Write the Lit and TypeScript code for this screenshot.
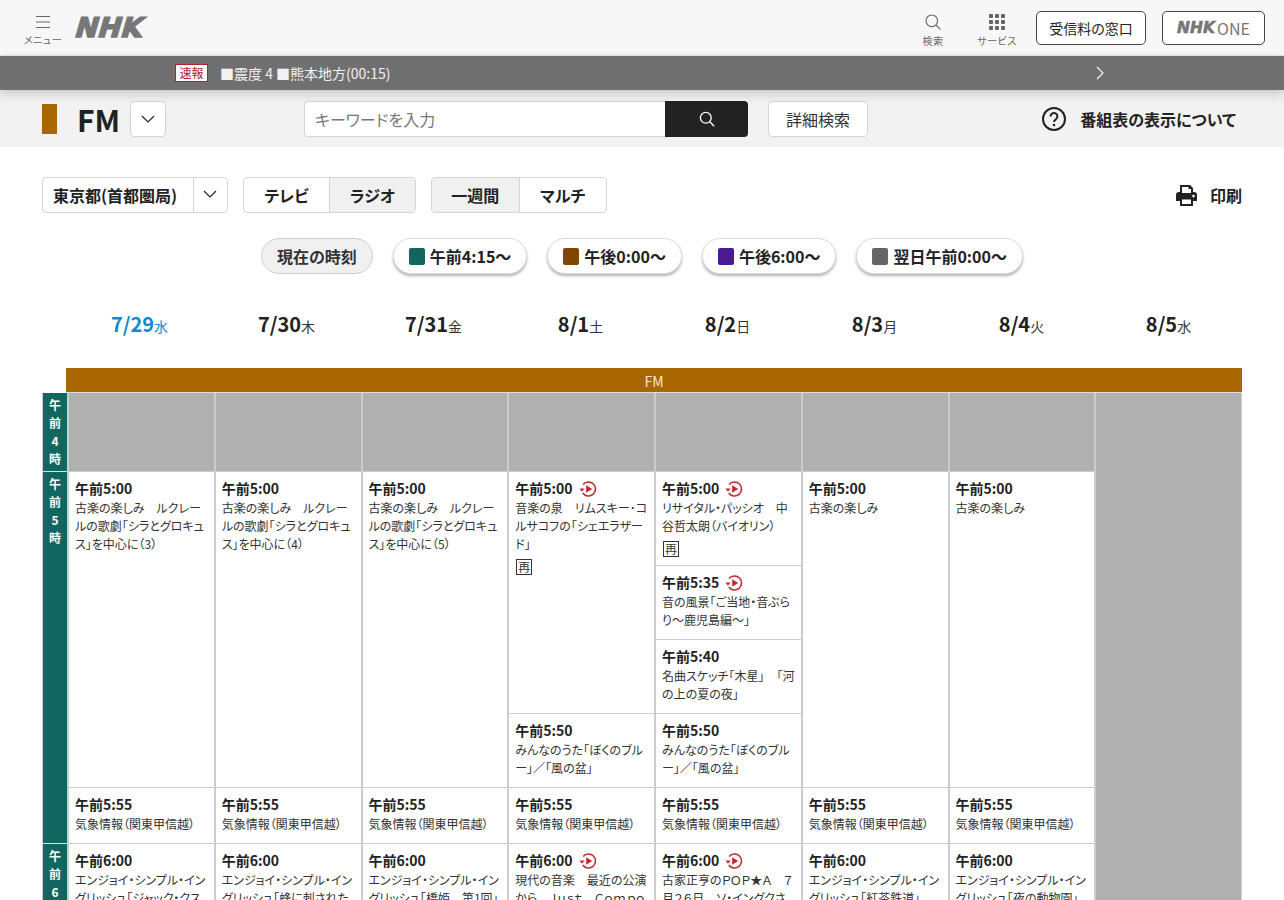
import { LitElement, html, css, svg } from 'lit';
import { customElement } from 'lit/decorators.js';

type Cell = { h: number; time?: string; text?: string; replay?: boolean; re?: boolean };

const AM4 = { h: 79 };
const WEATHER: Cell = { h: 56, time: '午前5:55', text: '気象情報（関東甲信越）' };
const ENGLISH = 'エンジョイ・シンプル・イングリッシュ';
const song: Cell = { h: 74, time: '午前5:50', text: 'みんなのうた「ぼくのブルー」／「風の盆」' };

const columns: Cell[][] = [
  [
    AM4,
    { h: 316, time: '午前5:00', text: '古楽の楽しみ　ルクレールの歌劇「シラとグロキュス」を中心に（3）' },
    WEATHER,
    { h: 300, time: '午前6:00', text: ENGLISH + '「ジャック・クスの冒険」' }
  ],
  [
    AM4,
    { h: 316, time: '午前5:00', text: '古楽の楽しみ　ルクレールの歌劇「シラとグロキュス」を中心に（4）' },
    WEATHER,
    { h: 300, time: '午前6:00', text: ENGLISH + '「蜂に刺された話」' }
  ],
  [
    AM4,
    { h: 316, time: '午前5:00', text: '古楽の楽しみ　ルクレールの歌劇「シラとグロキュス」を中心に（5）' },
    WEATHER,
    { h: 300, time: '午前6:00', text: ENGLISH + '「橋姫　第1回」' }
  ],
  [
    AM4,
    { h: 242, time: '午前5:00', replay: true, re: true, text: '音楽の泉　リムスキー･コルサコフの「シェエラザード」' },
    song,
    WEATHER,
    { h: 300, time: '午前6:00', replay: true, text: '現代の音楽　最近の公演から　Ｊｕｓｔ　Ｃｏｍｐｏｓｅｄ' }
  ],
  [
    AM4,
    { h: 94, time: '午前5:00', replay: true, re: true, text: 'リサイタル・パッシオ　中谷哲太朗（バイオリン）' },
    { h: 74, time: '午前5:35', replay: true, text: '音の風景「ご当地・音ぶらり～鹿児島編～」' },
    { h: 74, time: '午前5:40', text: '名曲スケッチ「木星」　「河の上の夏の夜」' },
    song,
    WEATHER,
    { h: 300, time: '午前6:00', replay: true, text: '古家正亨のＰＯＰ★Ａ　７月２６日　ソ・イングクさん' }
  ],
  [
    AM4,
    { h: 316, time: '午前5:00', text: '古楽の楽しみ' },
    WEATHER,
    { h: 300, time: '午前6:00', text: ENGLISH + '「紅茶鉄道」' }
  ],
  [
    AM4,
    { h: 316, time: '午前5:00', text: '古楽の楽しみ' },
    WEATHER,
    { h: 300, time: '午前6:00', text: ENGLISH + '「夜の動物園」' }
  ],
  [{ h: 800 }]
];

const dates = [
  ['7/29', '水'],
  ['7/30', '木'],
  ['7/31', '金'],
  ['8/1', '土'],
  ['8/2', '日'],
  ['8/3', '月'],
  ['8/4', '火'],
  ['8/5', '水']
];

const jumps = [
  ['午前4:15〜', '#11675f'],
  ['午後0:00〜', '#7f4700'],
  ['午後6:00〜', '#4b1a93'],
  ['翌日午前0:00〜', '#666666']
];

const hours = [
  { h: 79, label: ['午', '前', '4', '時'] },
  { h: 372, label: ['午', '前', '5', '時'] },
  { h: 300, label: ['午', '前', '6', '時'] }
];

const chevron = svg`<svg width="16" height="16" viewBox="0 0 16 16" fill="none" stroke="currentColor" stroke-width="1.2"><path d="M2 5l6 6 6-6"/></svg>`;

const replayIcon = html`<svg class="replay" width="18" height="18" viewBox="0 0 18 18">
  <path d="M4.14 4.500A7 7 0 1 1 3.770 13" fill="none" stroke="#c4282c" stroke-width="1.600"/>
  <path d="M0.400 8.600h5.200L3 11.800z" fill="#c4282c"/>
  <path d="M7.200 5.200l6 3.800-6 3.800z" fill="#c4282c"/>
</svg>`;

@customElement('app-root')
export class AppRoot extends LitElement {
  static styles = css`
    :host {
      display: block;
      height: 900px;
      overflow: hidden;
      background: #fff;
      color: #222;
      font-family: 'Noto Sans CJK JP', 'Noto Sans', sans-serif;
      font-feature-settings: 'palt';
    }
    button {
      font: inherit;
      color: inherit;
      background: #fff;
      padding: 0;
      cursor: pointer;
    }

    .top {
      height: 55px;
      background: #f7f7f7;
      border-bottom: 1px solid #e6e6e6;
      display: flex;
      align-items: center;
      padding: 0 19px 0 24px;
    }
    .tool {
      display: flex;
      flex-direction: column;
      align-items: center;
      color: #666;
      font-size: 10px;
      line-height: 12px;
      gap: 5px;
      padding-top: 5px;
    }
    .tool span {
      letter-spacing: 0.5px;
      white-space: nowrap;
    }
    .menu {
      width: 38px;
    }
    .logo {
      margin-left: 14px;
      width: 70px;
      font-family: 'DejaVu Sans', sans-serif;
      font-weight: 700;
      font-size: 27px;
      line-height: 28px;
      color: #777;
      -webkit-text-stroke: 1.6px #777;
      transform: skewX(-16deg);
      letter-spacing: 0.5px;
    }
    .spacer {
      flex: 1;
    }
    .search-tool {
      width: 24px;
      margin-right: 32px;
    }
    .service-tool {
      width: 40px;
      margin-right: 19px;
    }
    .outline {
      height: 34px;
      border: 1px solid #444;
      border-radius: 5px;
      background: #fff;
      display: flex;
      align-items: center;
      justify-content: center;
      font-size: 14px;
      box-sizing: border-box;
    }
    .fee {
      width: 110px;
      margin-right: 16px;
    }
    .one {
      width: 103px;
      gap: 2px;
      color: #777;
      font-size: 16px;
    }
    .one b {
      font-family: 'DejaVu Sans', sans-serif;
      font-size: 15.500px;
      font-style: italic;
      -webkit-text-stroke: 0.6px #777;
    }

    .alert {
      height: 34px;
      background: #707071;
      color: #f2f2f2;
      display: flex;
      align-items: center;
      padding-left: 175px;
      font-size: 14px;
      position: relative;
      box-shadow: 0 4px 10px rgba(0, 0, 0, 0.18);
    }
    .flash {
      width: 33px;
      height: 18px;
      box-sizing: border-box;
      border: 1px solid #b5212a;
      background: #fff;
      color: #b5212a;
      font-size: 12px;
      line-height: 16px;
      text-align: center;
      margin-right: 12px;
    }
    .alert-next {
      position: absolute;
      left: 1095px;
      top: 10px;
    }

    .band {
      height: 57px;
      background: #f2f2f2;
      display: flex;
      align-items: center;
      padding: 1px 48px 0 42px;
      box-sizing: border-box;
    }
    .swatch {
      width: 15px;
      height: 30px;
      background: #aa6600;
    }
    .channel {
      margin-left: 20px;
      width: 53px;
      font-size: 30px;
      font-weight: 700;
      line-height: 36px;
    }
    .square {
      width: 36px;
      height: 36px;
      border: 1px solid #d4d4d4;
      border-radius: 4px;
      background: #fff;
      display: flex;
      align-items: center;
      justify-content: center;
      box-sizing: border-box;
    }
    .keyword {
      margin-left: 138px;
      width: 361px;
      height: 36px;
      box-sizing: border-box;
      border: 1px solid #d4d4d4;
      border-right: 0;
      border-radius: 4px 0 0 4px;
      background: #fff;
      color: #777;
      font-size: 16px;
      line-height: 34px;
      padding-left: 10px;
    }
    .go {
      width: 83px;
      height: 36px;
      background: #222;
      border-radius: 0 4px 4px 0;
      display: flex;
      align-items: center;
      justify-content: center;
    }
    .detail {
      margin-left: 20px;
      width: 100px;
      height: 36px;
      box-sizing: border-box;
      border: 1px solid #d4d4d4;
      border-radius: 4px;
      background: #fff;
      font-size: 16px;
      line-height: 34px;
      text-align: center;
      color: #333;
    }
    .about {
      display: flex;
      align-items: center;
      gap: 14px;
      font-size: 16px;
      font-weight: 700;
    }

    main {
      padding: 30px 42px 0;
    }
    .controls {
      display: flex;
      align-items: center;
      height: 36px;
    }
    .group {
      display: flex;
      height: 36px;
      box-sizing: border-box;
      border: 1px solid #d4d4d4;
      border-radius: 4px;
      overflow: hidden;
      font-size: 16px;
      font-weight: 700;
      line-height: 34px;
      text-align: center;
    }
    .group div + div {
      border-left: 1px solid #d4d4d4;
    }
    .group .on {
      background: #f0f0f0;
    }
    .area {
      width: 186px;
      margin-right: 15px;
    }
    .area-name {
      width: 150px;
      padding-left: 10px;
      box-sizing: border-box;
      text-align: left;
      white-space: nowrap;
    }
    .area-arrow {
      flex: 1;
      display: flex;
      align-items: center;
      justify-content: center;
      padding: 0 2px 3px 0;
    }
    .media {
      width: 173px;
      margin-right: 15px;
    }
    .view {
      width: 176px;
    }
    .group .half {
      width: 85px;
    }
    .view .half {
      width: 89px;
    }
    .print {
      margin-left: auto;
      display: flex;
      align-items: center;
      gap: 13px;
      font-size: 16px;
      font-weight: 700;
    }

    .pills {
      margin-top: 25px;
      display: flex;
      justify-content: center;
      gap: 20px;
    }
    .pill {
      height: 36px;
      box-sizing: border-box;
      border: 1px solid #dcdcdc;
      border-radius: 18px;
      padding: 0 15px;
      background: #fff;
      box-shadow: 0 2px 3px rgba(0, 0, 0, 0.3);
      display: flex;
      align-items: center;
      gap: 5px;
      font-size: 16px;
      font-weight: 700;
    }
    .pill.now {
      background: #f0f0f0;
      border-color: #cfcfcf;
      box-shadow: none;
      color: #333;
    }
    .dot {
      width: 16px;
      height: 17px;
      border-radius: 2px;
    }

    .dates {
      margin: 28px 0 24px 24px;
      display: grid;
      grid-template-columns: repeat(8, 1fr);
      height: 42px;
      align-items: center;
      text-align: center;
      font-size: 14px;
      color: #333;
    }
    .dates b {
      font-size: 20px;
      color: #222;
    }
    .dates .today,
    .dates .today b {
      color: #0e8ad0;
    }

    .channel-bar {
      margin-left: 24px;
      height: 24px;
      background: #aa6600;
      color: #f7ead2;
      font-size: 14px;
      line-height: 26px;
      text-align: center;
      border-bottom: 1px solid #ddd;
    }
    .table {
      display: flex;
    }
    .hours {
      width: 25px;
      box-sizing: border-box;
      border-left: 1px solid #ccc;
      flex: none;
    }
    .hour {
      box-sizing: border-box;
      background: #11675f;
      border-bottom: 1px solid #ddd;
      color: #fff;
      font-size: 12px;
      font-weight: 700;
      line-height: 18px;
      text-align: center;
      padding-top: 3px;
    }
    .cols {
      flex: 1;
      display: grid;
      grid-template-columns: repeat(7, 146.75px) 1fr;
    }
    .col {
      border-left: 2px solid #ccc;
      min-width: 0;
    }
    .col:last-child {
      border-right: 1px solid #ccc;
    }
    .cell {
      box-sizing: border-box;
      border-bottom: 1px solid #ccc;
      padding: 6px 6px 0;
      overflow: hidden;
    }
    .cell.empty {
      background: #b0b0b0;
    }
    .time {
      display: flex;
      align-items: center;
      gap: 6px;
      font-size: 14px;
      font-weight: 700;
      line-height: 21px;
    }
    .desc {
      font-size: 12px;
      line-height: 18px;
      color: #333;
    }
    .re {
      display: block;
      width: 16px;
      height: 16px;
      box-sizing: border-box;
      border: 1px solid #333;
      font-size: 12px;
      line-height: 14px;
      text-align: center;
      margin: 6px 0 0 1px;
      color: #333;
    }
  `;

  renderCell(cell: Cell) {
    if (!cell.time) {
      return html`<div class="cell empty" style="height:${cell.h}px"></div>`;
    }
    return html`<div class="cell" style="height:${cell.h}px">
      <div class="time">${cell.time}${cell.replay ? replayIcon : ''}</div>
      <div class="desc">${cell.text}</div>
      ${cell.re ? html`<span class="re">再</span>` : ''}
    </div>`;
  }

  render() {
    return html`
      <header class="top">
        <div class="tool menu">
          <svg width="14" height="14" viewBox="0 0 14 14" stroke="#666" stroke-width="1.2">
            <path d="M0 1.5h14M0 7h14M0 12.5h14" />
          </svg>
          <span>メニュー</span>
        </div>
        <div class="logo">NHK</div>
        <div class="spacer"></div>
        <div class="tool search-tool">
          <svg width="16" height="16" viewBox="0 0 16 16" fill="none" stroke="#666" stroke-width="1.2">
            <circle cx="6.8" cy="6.8" r="5.8" />
            <path d="M11 11l4.4 4.4" />
          </svg>
          <span>検索</span>
        </div>
        <div class="tool service-tool">
          <svg width="16" height="16" viewBox="0 0 16 16" fill="#666">
            ${[0, 6, 12].map((y) =>
              [0, 6, 12].map((x) => svg`<rect x=${x} y=${y} width="4" height="4" rx="0.8" />`)
            )}
          </svg>
          <span>サービス</span>
        </div>
        <button class="outline fee">受信料の窓口</button>
        <button class="outline one"><b>NHK</b>ONE</button>
      </header>

      <div class="alert">
        <span class="flash">速報</span>
        <span>■震度 4 ■熊本地方(00:15)</span>
        <svg class="alert-next" width="10" height="14" viewBox="0 0 10 14" fill="none" stroke="#fff" stroke-width="1.1">
          <path d="M2 1l6 6-6 6" />
        </svg>
      </div>

      <div class="band">
        <div class="swatch"></div>
        <div class="channel">FM</div>
        <div class="square">${chevron}</div>
        <div class="keyword">キーワードを入力</div>
        <div class="go">
          <svg width="16" height="16" viewBox="0 0 16 16" fill="none" stroke="#fff" stroke-width="1.3">
            <circle cx="6.8" cy="6.8" r="5.4" />
            <path d="M10.8 10.8l4.4 4.4" />
          </svg>
        </div>
        <div class="detail">詳細検索</div>
        <div class="spacer"></div>
        <div class="about">
          <svg width="24" height="24" viewBox="0 0 24 24">
            <circle cx="12" cy="12" r="11" fill="none" stroke="#222" stroke-width="2" />
            <path d="M8.6 9.4a3.4 3.4 0 1 1 5.2 2.9c-1.2.8-1.8 1.4-1.8 2.8" fill="none" stroke="#222" stroke-width="2" />
            <circle cx="12" cy="18" r="1.3" fill="#222" />
          </svg>
          <span>番組表の表示について</span>
        </div>
      </div>

      <main>
        <div class="controls">
          <div class="group area">
            <div class="area-name">東京都(首都圏局)</div>
            <div class="area-arrow">${chevron}</div>
          </div>
          <div class="group media">
            <div class="half">テレビ</div>
            <div class="half on">ラジオ</div>
          </div>
          <div class="group view">
            <div class="half on">一週間</div>
            <div class="half">マルチ</div>
          </div>
          <div class="print">
            <svg width="21" height="21" viewBox="0 0 21 21" fill="#222">
              <path
                fill-rule="evenodd"
                d="M4 0h10l3 3v4h1a3 3 0 0 1 3 3v6h-4v5H4v-5H0v-6a3 3 0 0 1 3-3h1zM6 2v6h9V4h-2.500V2zM6 14.500V19h9v-4.500zM17.500 9.800a1.300 1.300 0 1 0 0 2.600 1.300 1.300 0 0 0 0-2.600z"
              />
            </svg>
            <span>印刷</span>
          </div>
        </div>

        <div class="pills">
          <div class="pill now">現在の時刻</div>
          ${jumps.map(
            ([label, color]) =>
              html`<div class="pill"><span class="dot" style="background:${color}"></span>${label}</div>`
          )}
        </div>

        <div class="dates">
          ${dates.map(
            ([day, week], i) => html`<div class=${i === 0 ? 'today' : ''}><b>${day}</b>${week}</div>`
          )}
        </div>

        <div class="channel-bar">FM</div>
        <div class="table">
          <div class="hours">
            ${hours.map(
              (hour) => html`<div class="hour" style="height:${hour.h}px">
                ${hour.label.map((c) => html`<div>${c}</div>`)}
              </div>`
            )}
          </div>
          <div class="cols">
            ${columns.map((col) => html`<div class="col">${col.map((cell) => this.renderCell(cell))}</div>`)}
          </div>
        </div>
      </main>
    `;
  }
}
